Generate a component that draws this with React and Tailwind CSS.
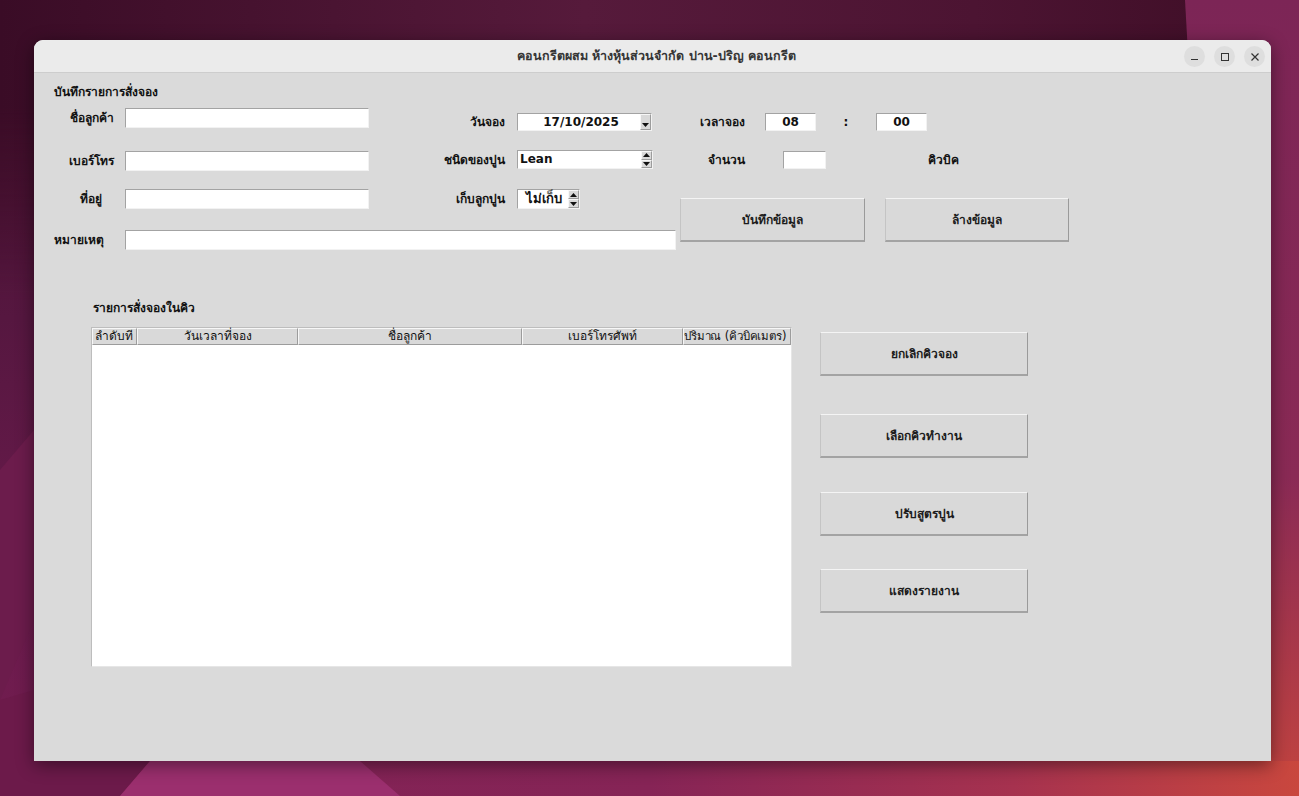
import React from "react";

const FONT = { fontFamily: "Tahoma, 'DejaVu Sans', 'Noto Sans', sans-serif" };

const sunken = "bg-white border border-t-[#a3a3a3] border-l-[#a3a3a3] border-b-[#f2f2f2] border-r-[#f2f2f2]";
const raised = "bg-[#d9d9d9] border border-t-[#f7f7f7] border-l-[#f7f7f7] border-b-[#9c9c9c] border-r-[#9c9c9c]";

function Arrow({ up }) {
  return (
    <svg width="7" height="4" viewBox="0 0 7 4" className="block">
      {up ? <polygon points="0,4 7,4 3.5,0" fill="#111" /> : <polygon points="0,0 7,0 3.5,4" fill="#111" />}
    </svg>
  );
}

function SpinArrows() {
  return (
    <div className="flex flex-col w-[11px] h-full">
      <div className={`${raised} flex-1 flex items-center justify-center`}><Arrow up /></div>
      <div className={`${raised} flex-1 flex items-center justify-center`}><Arrow /></div>
    </div>
  );
}

function Btn({ children, className = "" }) {
  return (
    <div className={`bg-[#d9d9d9] border border-t-[#f4f4f4] border-l-[#c4c4c4] border-r-[#9a9a9a] border-b-2 border-b-[#a3a3a3] flex items-center justify-center text-[12px] font-bold text-[#1c1c1c] ${className}`}>
      {children}
    </div>
  );
}

function Wallpaper() {
  return (
    <svg className="absolute inset-0" width="1299" height="796" viewBox="0 0 1299 796">
      <defs>
        <linearGradient id="base" x1="0" y1="0" x2="0" y2="1">
          <stop offset="0" stopColor="#48112f" />
          <stop offset="0.4" stopColor="#561740" />
          <stop offset="0.75" stopColor="#6b1b4d" />
          <stop offset="1" stopColor="#741d50" />
        </linearGradient>
        <linearGradient id="top" x1="0" y1="0" x2="1" y2="0">
          <stop offset="0" stopColor="#3a0c26" />
          <stop offset="0.45" stopColor="#561a3b" />
          <stop offset="0.75" stopColor="#4c1432" />
          <stop offset="1" stopColor="#3d0d25" />
        </linearGradient>
        <linearGradient id="fade" x1="0" y1="0" x2="0" y2="1">
          <stop offset="0" stopColor="#fff" />
          <stop offset="0.35" stopColor="#fff" />
          <stop offset="1" stopColor="#000" />
        </linearGradient>
        <mask id="topmask">
          <rect width="1299" height="300" fill="url(#fade)" />
        </mask>
        <linearGradient id="bottom" x1="0" y1="0" x2="1" y2="0">
          <stop offset="0" stopColor="#7f2255" />
          <stop offset="0.5" stopColor="#862456" />
          <stop offset="0.78" stopColor="#a6324f" />
          <stop offset="1" stopColor="#c9473e" />
        </linearGradient>
        <linearGradient id="right" x1="0" y1="0" x2="0" y2="1">
          <stop offset="0" stopColor="#7c2556" />
          <stop offset="0.6" stopColor="#8a2a55" />
          <stop offset="1" stopColor="#c3443f" />
        </linearGradient>
      </defs>
      <rect width="1299" height="796" fill="url(#base)" />
      <rect width="1299" height="300" fill="url(#top)" mask="url(#topmask)" />
      <polygon points="1185,0 1299,0 1299,796 1230,796" fill="url(#right)" />
      <polygon points="0,470 34,430 34,620 0,700" fill="#6c1c4c" />
      <rect x="0" y="761" width="1299" height="35" fill="url(#bottom)" />
      <polygon points="0,700 34,690 34,761 150,761 120,796 0,796" fill="#6c1a4a" />
      <polygon points="150,761 360,761 400,796 120,796" fill="#9b2f6e" />
    </svg>
  );
}

function Window() {
  return (
    <div className="absolute left-[34px] top-[40px] w-[1237px] h-[721px] rounded-t-[9px] overflow-hidden shadow-[0_4px_18px_rgba(0,0,0,0.45)] flex flex-col bg-[#dadada]">
      <div className="h-[33px] bg-[#ebebeb] border-b border-[#cdcdcd] flex items-center relative shrink-0">
        <div className="flex-1 text-center text-[12.5px] font-semibold text-[#353535] pl-[8px]">
          คอนกรีตผสม ห้างหุ้นส่วนจำกัด ปาน-ปริญ คอนกรีต
        </div>
        <div className="absolute right-[6px] top-[6px] flex gap-[9px]">
          <div className="w-[21px] h-[21px] rounded-full bg-[#dedede] flex items-center justify-center">
            <div className="w-[7px] h-[1px] bg-[#333] mt-[5px]" />
          </div>
          <div className="w-[21px] h-[21px] rounded-full bg-[#dedede] flex items-center justify-center">
            <div className="w-[8px] h-[8px] border border-[#333]" />
          </div>
          <div className="w-[21px] h-[21px] rounded-full bg-[#dedede] flex items-center justify-center">
            <svg width="8" height="8" viewBox="0 0 8 8"><path d="M0.5 0.5 L7.5 7.5 M7.5 0.5 L0.5 7.5" stroke="#333" strokeWidth="1.2" /></svg>
          </div>
        </div>
      </div>

      <div className="flex-1 pl-[20px] text-[12px] text-[#111]">
        <div className="pt-[11px] h-[27px] leading-[16px] font-bold">บันทึกรายการสั่งจอง</div>

        <div className="flex">
          {/* left + middle fields */}
          <div className="w-[622px] flex flex-col">
            <div className="flex">
              <div className="flex flex-col font-bold">
                <div className="mt-[8px] h-[20px] flex items-center">
                  <div className="w-[71px] text-center pl-[4px]">ชื่อลูกค้า</div>
                  <div className={`${sunken} w-[244px] h-full`} />
                </div>
                <div className="mt-[23px] h-[20px] flex items-center">
                  <div className="w-[71px] text-center pl-[4px]">เบอร์โทร</div>
                  <div className={`${sunken} w-[244px] h-full`} />
                </div>
                <div className="mt-[18px] h-[20px] flex items-center">
                  <div className="w-[71px] text-center pl-[2px]">ที่อยู่</div>
                  <div className={`${sunken} w-[244px] h-full`} />
                </div>
              </div>

              <div className="ml-[36px] flex flex-col font-bold">
                <div className="mt-[13px] h-[18px] flex items-center">
                  <div className="w-[100px] text-right mr-[12px]">วันจอง</div>
                  <div className={`${sunken} w-[135px] h-full flex items-stretch`}>
                    <div className="flex-1 text-center leading-[16px] pl-[4px]">17/10/2025</div>
                    <div className={`${raised} w-[11px] flex items-end justify-center pb-[2px]`}><Arrow /></div>
                  </div>
                </div>
                <div className="mt-[19px] h-[19px] flex items-center">
                  <div className="w-[100px] text-right mr-[12px]">ชนิดของปูน</div>
                  <div className={`${sunken} w-[136px] h-full flex items-stretch`}>
                    <div className="flex-1 pl-[2px] leading-[17px]">Lean</div>
                    <SpinArrows />
                  </div>
                </div>
                <div className="mt-[20px] h-[20px] flex items-center">
                  <div className="w-[100px] text-right mr-[12px]">เก็บลูกปูน</div>
                  <div className={`${sunken} w-[63px] h-full flex items-stretch`}>
                    <div className="flex-1 pl-[8px] leading-[18px] text-[13px]">ไม่เก็บ</div>
                    <SpinArrows />
                  </div>
                </div>
              </div>
            </div>

            <div className="mt-[21px] h-[20px] flex items-center font-bold">
              <div className="w-[71px]">หมายเหตุ</div>
              <div className={`${sunken} w-[551px] h-full`} />
            </div>
          </div>

          {/* right fields */}
          <div className="ml-[4px] flex flex-col font-bold">
            <div className="mt-[13px] h-[18px] flex items-center">
              <div className="w-[85px] text-center">เวลาจอง</div>
              <div className={`${sunken} w-[51px] h-full text-center leading-[16px]`}>08</div>
              <div className="w-[60px] text-center">:</div>
              <div className={`${sunken} w-[51px] h-full text-center leading-[16px]`}>00</div>
            </div>
            <div className="mt-[20px] h-[18px] flex items-center">
              <div className="w-[103px] pl-[28px]">จำนวน</div>
              <div className={`${sunken} w-[43px] h-full`} />
              <div className="ml-[102px]">คิวบิค</div>
            </div>
            <div className="mt-[29px] flex gap-[20px]">
              <Btn className="w-[185px] h-[44px]">บันทึกข้อมูล</Btn>
              <Btn className="w-[184px] h-[44px]">ล้างข้อมูล</Btn>
            </div>
          </div>
        </div>

        <div className="mt-[50px] ml-[39px] h-[16px] leading-[16px] font-bold">รายการสั่งจองในคิว</div>

        <div className="mt-[11px] ml-[37px] flex">
          <div className="w-[701px] h-[340px] bg-white border border-t-[#bdbdbd] border-l-[#bdbdbd] border-b-[#e6e6e6] border-r-[#e6e6e6] flex flex-col">
            <div className="h-[17px] flex text-[12px] leading-[15px] bg-[#d9d9d9] shrink-0">
              <div className={`${raised} w-[45px] pl-[2px] whitespace-nowrap overflow-hidden`}>ลำดับที่</div>
              <div className={`${raised} w-[161px] text-center`}>วันเวลาที่จอง</div>
              <div className={`${raised} w-[224px] text-center`}>ชื่อลูกค้า</div>
              <div className={`${raised} w-[161px] text-center`}>เบอร์โทรศัพท์</div>
              <div className={`${raised} flex-1 whitespace-nowrap overflow-hidden text-[11.5px] tracking-[-0.15px]`}>ปริมาณ (คิวบิคเมตร)</div>
            </div>
            <div className="flex-1 bg-white" />
          </div>

          <div className="ml-[28px] flex flex-col">
            <Btn className="mt-[5px] w-[208px] h-[44px]">ยกเลิกคิวจอง</Btn>
            <Btn className="mt-[38px] w-[208px] h-[44px]">เลือกคิวทำงาน</Btn>
            <Btn className="mt-[34px] w-[208px] h-[44px]">ปรับสูตรปูน</Btn>
            <Btn className="mt-[33px] w-[208px] h-[44px]">แสดงรายงาน</Btn>
          </div>
        </div>
      </div>
    </div>
  );
}

export default function App() {
  return (
    <div className="relative w-[1299px] h-[796px] overflow-hidden" style={FONT}>
      <Wallpaper />
      <Window />
    </div>
  );
}
